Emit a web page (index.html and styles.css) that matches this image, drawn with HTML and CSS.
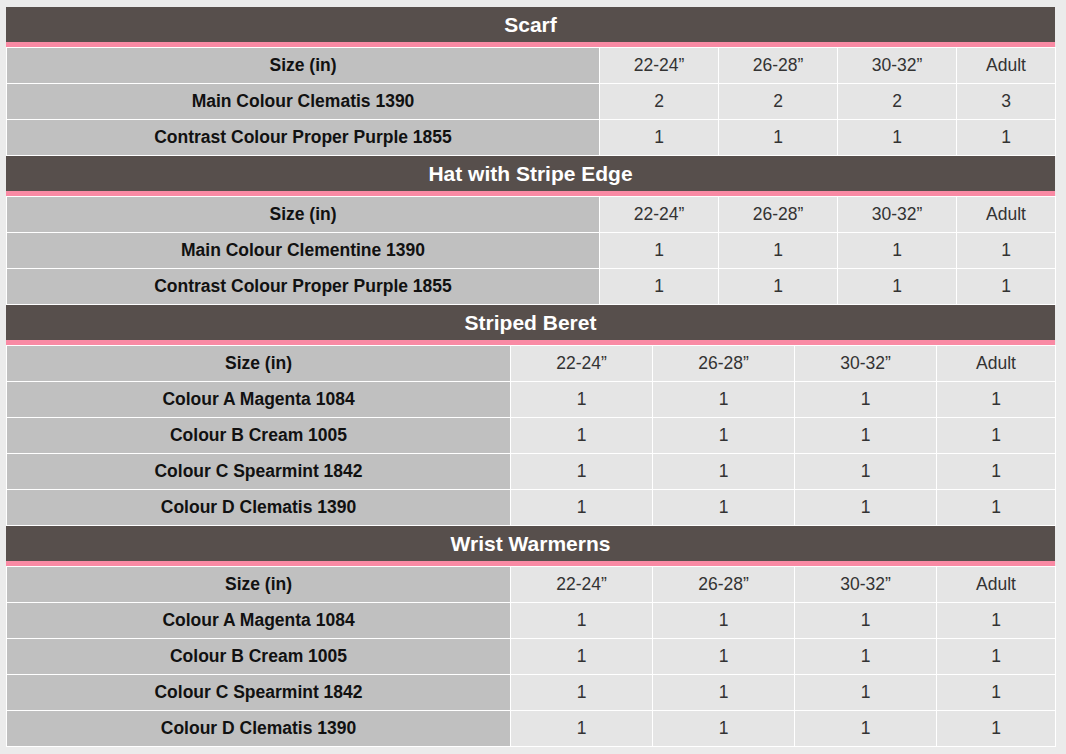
FILE: index.html
```html
<!DOCTYPE html>
<html>
<head>
<meta charset="utf-8">
<link rel="stylesheet" href="styles.css">
</head>
<body>
<div class="page">
  <section class="block">
    <h2 class="title">Scarf</h2>
    <table class="grid">
      <colgroup><col class="c-label-a"><col class="c-a"><col class="c-a"><col class="c-a"><col class="c-a-last"></colgroup>
      <tr><th>Size (in)</th><td>22-24”</td><td>26-28”</td><td>30-32”</td><td>Adult</td></tr>
      <tr><th>Main Colour Clematis 1390</th><td>2</td><td>2</td><td>2</td><td>3</td></tr>
      <tr><th>Contrast Colour Proper Purple 1855</th><td>1</td><td>1</td><td>1</td><td>1</td></tr>
    </table>
  </section>
  <section class="block">
    <h2 class="title">Hat with Stripe Edge</h2>
    <table class="grid">
      <colgroup><col class="c-label-a"><col class="c-a"><col class="c-a"><col class="c-a"><col class="c-a-last"></colgroup>
      <tr><th>Size (in)</th><td>22-24”</td><td>26-28”</td><td>30-32”</td><td>Adult</td></tr>
      <tr><th>Main Colour Clementine 1390</th><td>1</td><td>1</td><td>1</td><td>1</td></tr>
      <tr><th>Contrast Colour Proper Purple 1855</th><td>1</td><td>1</td><td>1</td><td>1</td></tr>
    </table>
  </section>
  <section class="block">
    <h2 class="title">Striped Beret</h2>
    <table class="grid">
      <colgroup><col class="c-label-b"><col class="c-b"><col class="c-b"><col class="c-b"><col class="c-b-last"></colgroup>
      <tr><th>Size (in)</th><td>22-24”</td><td>26-28”</td><td>30-32”</td><td>Adult</td></tr>
      <tr><th>Colour A Magenta 1084</th><td>1</td><td>1</td><td>1</td><td>1</td></tr>
      <tr><th>Colour B Cream 1005</th><td>1</td><td>1</td><td>1</td><td>1</td></tr>
      <tr><th>Colour C Spearmint 1842</th><td>1</td><td>1</td><td>1</td><td>1</td></tr>
      <tr><th>Colour D Clematis 1390</th><td>1</td><td>1</td><td>1</td><td>1</td></tr>
    </table>
  </section>
  <section class="block">
    <h2 class="title">Wrist Warmerns</h2>
    <table class="grid">
      <colgroup><col class="c-label-b"><col class="c-b"><col class="c-b"><col class="c-b"><col class="c-b-last"></colgroup>
      <tr><th>Size (in)</th><td>22-24”</td><td>26-28”</td><td>30-32”</td><td>Adult</td></tr>
      <tr><th>Colour A Magenta 1084</th><td>1</td><td>1</td><td>1</td><td>1</td></tr>
      <tr><th>Colour B Cream 1005</th><td>1</td><td>1</td><td>1</td><td>1</td></tr>
      <tr><th>Colour C Spearmint 1842</th><td>1</td><td>1</td><td>1</td><td>1</td></tr>
      <tr><th>Colour D Clematis 1390</th><td>1</td><td>1</td><td>1</td><td>1</td></tr>
    </table>
  </section>
</div>
</body>
</html>
```
FILE: styles.css
```css
html, body {
  margin: 0;
  padding: 0;
  background: #ebebeb;
}
body {
  font-family: "Liberation Sans", Arial, sans-serif;
}
.page {
  padding: 7px 0 0 6px;
  width: 1049px;
}
.block {
  margin: 0;
}
.title {
  margin: 0;
  height: 35px;
  line-height: 35px;
  background: #574f4c;
  border-bottom: 5px solid #f98aa4;
  color: #ffffff;
  font-size: 21px;
  font-weight: bold;
  text-align: center;
}
.grid {
  width: 1049px;
  border-collapse: collapse;
  table-layout: fixed;
}
.grid th,
.grid td {
  border: 1px solid #ffffff;
  height: 35px;
  padding: 0;
  text-align: center;
  vertical-align: middle;
  font-size: 17.5px;
}
.grid th {
  background: #c0c0c0;
  color: #111111;
  font-weight: bold;
}
.grid td {
  background: #e5e5e5;
  color: #333333;
}
.c-label-a { width: 593px; }
.c-a { width: 119px; }
.c-a-last { width: 99px; }
.c-label-b { width: 504px; }
.c-b { width: 142px; }
.c-b-last { width: 119px; }
```
